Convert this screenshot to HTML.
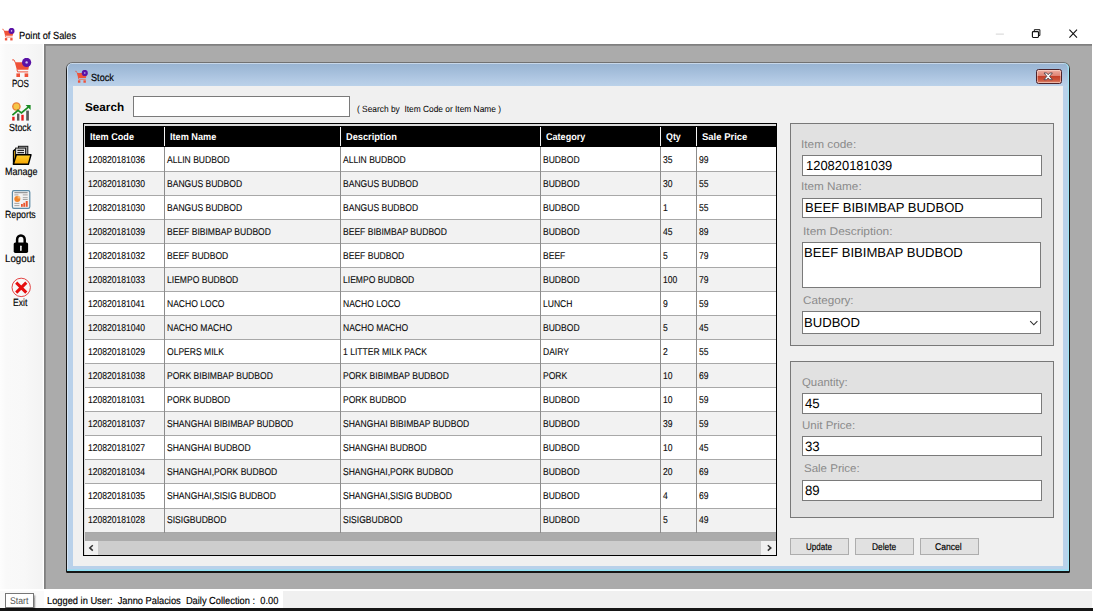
<!DOCTYPE html>
<html><head><meta charset="utf-8"><title>Point of Sales</title>
<style>
html,body{margin:0;padding:0;background:#fff;overflow:hidden}
body{width:1093px;height:611px;position:relative;font-family:"Liberation Sans",sans-serif}
body>div,body>svg,body>span{position:absolute;display:block}
.t{white-space:pre;line-height:14px;transform-origin:0 0}
.k{-webkit-text-stroke:0.16px currentColor}
.g{-webkit-text-stroke:0.12px currentColor}
</style></head><body>
<div style="left:0px;top:44px;width:44px;height:546px;background:linear-gradient(90deg,#fdfdfd 0%,#f9f9f9 14%,#f8f8f8 55%,#f3f3f3 96%,#ffffff 98%)"></div>
<div style="left:44px;top:44px;width:1047.5px;height:545px;background:#ababab;box-shadow:inset 1.8px 1.8px 0 #808080"></div>
<div style="left:0px;top:589px;width:1093px;height:1.5px;background:#fff"></div>
<div style="left:0px;top:590.7px;width:1091.6px;height:17.5px;background:#f0f0f0"></div>
<div style="left:0px;top:590.5px;width:44px;height:17.7px;background:#fafafa"></div>
<div style="left:44px;top:590.5px;width:239px;height:17.7px;background:#fff"></div>
<div style="left:0px;top:608.2px;width:1093px;height:3px;background:#161616"></div>
<div style="left:5.3px;top:592.7px;width:29px;height:15px;background:#fff;border:1px solid #767676;box-sizing:border-box;box-shadow:1.5px 1.5px 1.5px rgba(0,0,0,.35)"></div>
<svg style="left:990px;top:25px" width="100" height="18" viewBox="990 25 100 18"><path d="M995.8 34.1H1003.9" stroke="#d4d4d4" stroke-width="1"/><path d="M1034.3 31.2v-1.5h5.6v5.8h-1.3" fill="none" stroke="#111" stroke-width="1"/><rect x="1032.4" y="31.6" width="6.1" height="5.9" rx="0.9" fill="none" stroke="#111" stroke-width="1.15"/><path d="M1069.4 29.7l7.6 8M1077 29.7l-7.6 8" stroke="#111" stroke-width="1.1"/></svg>
<div style="left:66.1px;top:61.5px;width:1003.6px;height:511.0px;border-radius:6.5px 6.5px 1.5px 1.5px;background:linear-gradient(180deg,#787878 0,#686868 1.2px,#1c1c1c 9px,#161616 100%)"></div>
<div style="left:67.1px;top:62.6px;width:1001.7px;height:508.8px;border-radius:5.5px 5.5px 0.5px 0.5px;background:linear-gradient(180deg,#e3ecf7 0,#9ab5d3 1.3px,#a3bdda 8px,#b4cbe5 18px,#bcd3ea 24px,#b9d1ea 25px,#b9d1ea 100%);box-shadow:inset 0 -1.5px 0 #8fe2f4, inset -1.2px 0 0 #a0e4f4, inset 1px 0 0 #d6e4f2"></div>
<div style="left:73px;top:86.3px;width:990.2px;height:479.5px;background:#f0f0f0"></div>
<div style="left:1036.1px;top:69.4px;width:26px;height:14.4px;box-sizing:border-box;border:1px solid #4d222a;border-radius:2.5px;background:linear-gradient(180deg,#eeb3a8 0,#e79a8c 20%,#de8272 46%,#c4402a 50%,#cc5238 75%,#dc8a72 100%);box-shadow:inset 0 0 0 0.9px rgba(255,225,215,.55)"></div>
<svg style="left:1043.4px;top:72px" width="10.4" height="8.7" viewBox="-1 -1 10.4 8.7"><path d="M0 0H2.7L4.2 1.75L5.7 0H8.4L5.55 3.35L8.4 6.7H5.7L4.2 4.95L2.7 6.7H0L2.85 3.35Z" fill="#fff" stroke="#50444c" stroke-width="0.9" stroke-linejoin="round"/></svg>
<div style="left:132.7px;top:96.2px;width:217px;height:20.6px;box-sizing:border-box;background:#fff;border:1px solid #7a7a7a"></div>
<div style="left:83.1px;top:123.1px;width:693.9px;height:432.9px;background:#000"></div>
<div style="left:84.1px;top:124.1px;width:691.8px;height:430.6px;background:#dadada"></div>
<div style="left:85.2px;top:125.6px;width:690.6999999999999px;height:429.1px;background:#ababab"></div>
<div style="left:85.2px;top:125.6px;width:690.6999999999999px;height:21.599999999999994px;background:#000"></div>
<div style="left:85.2px;top:147.2px;width:690.6999999999999px;height:24.75px;background:#fff;box-shadow:inset 0 -1px 0 #a8a8a8"></div>
<div style="left:85.2px;top:171.95px;width:690.6999999999999px;height:24.04px;background:#f2f2f2;box-shadow:inset 0 -1px 0 #a8a8a8"></div>
<div style="left:85.2px;top:195.99px;width:690.6999999999999px;height:24.04px;background:#fff;box-shadow:inset 0 -1px 0 #a8a8a8"></div>
<div style="left:85.2px;top:220.03px;width:690.6999999999999px;height:24.04px;background:#f2f2f2;box-shadow:inset 0 -1px 0 #a8a8a8"></div>
<div style="left:85.2px;top:244.07px;width:690.6999999999999px;height:24.04px;background:#fff;box-shadow:inset 0 -1px 0 #a8a8a8"></div>
<div style="left:85.2px;top:268.11px;width:690.6999999999999px;height:24.04px;background:#f2f2f2;box-shadow:inset 0 -1px 0 #a8a8a8"></div>
<div style="left:85.2px;top:292.15px;width:690.6999999999999px;height:24.04px;background:#fff;box-shadow:inset 0 -1px 0 #a8a8a8"></div>
<div style="left:85.2px;top:316.19px;width:690.6999999999999px;height:24.04px;background:#f2f2f2;box-shadow:inset 0 -1px 0 #a8a8a8"></div>
<div style="left:85.2px;top:340.23px;width:690.6999999999999px;height:24.04px;background:#fff;box-shadow:inset 0 -1px 0 #a8a8a8"></div>
<div style="left:85.2px;top:364.27px;width:690.6999999999999px;height:24.04px;background:#f2f2f2;box-shadow:inset 0 -1px 0 #a8a8a8"></div>
<div style="left:85.2px;top:388.31px;width:690.6999999999999px;height:24.04px;background:#fff;box-shadow:inset 0 -1px 0 #a8a8a8"></div>
<div style="left:85.2px;top:412.35px;width:690.6999999999999px;height:24.04px;background:#f2f2f2;box-shadow:inset 0 -1px 0 #a8a8a8"></div>
<div style="left:85.2px;top:436.39px;width:690.6999999999999px;height:24.04px;background:#fff;box-shadow:inset 0 -1px 0 #a8a8a8"></div>
<div style="left:85.2px;top:460.43px;width:690.6999999999999px;height:24.04px;background:#f2f2f2;box-shadow:inset 0 -1px 0 #a8a8a8"></div>
<div style="left:85.2px;top:484.47px;width:690.6999999999999px;height:24.04px;background:#fff;box-shadow:inset 0 -1px 0 #a8a8a8"></div>
<div style="left:85.2px;top:508.51px;width:690.6999999999999px;height:24.04px;background:#f2f2f2;box-shadow:inset 0 -1px 0 #a8a8a8"></div>
<div style="left:164.1px;top:147.2px;width:1px;height:385.34999999999997px;background:#8c8c8c"></div>
<div style="left:164.4px;top:127px;width:1px;height:19.4px;background:#f4f4f4"></div>
<div style="left:340.0px;top:147.2px;width:1px;height:385.34999999999997px;background:#8c8c8c"></div>
<div style="left:340.3px;top:127px;width:1px;height:19.4px;background:#f4f4f4"></div>
<div style="left:540.1px;top:147.2px;width:1px;height:385.34999999999997px;background:#8c8c8c"></div>
<div style="left:540.4px;top:127px;width:1px;height:19.4px;background:#f4f4f4"></div>
<div style="left:660.1px;top:147.2px;width:1px;height:385.34999999999997px;background:#8c8c8c"></div>
<div style="left:660.4px;top:127px;width:1px;height:19.4px;background:#f4f4f4"></div>
<div style="left:696.1px;top:147.2px;width:1px;height:385.34999999999997px;background:#8c8c8c"></div>
<div style="left:696.4px;top:127px;width:1px;height:19.4px;background:#f4f4f4"></div>
<div style="left:85.2px;top:541.0px;width:690.6999999999999px;height:13.7px;background:#f0f0f0"></div>
<div style="left:98px;top:541.0px;width:662.8px;height:13.6px;background:#cdcdcd"></div>
<svg style="left:84.8px;top:541px" width="692" height="14" viewBox="84.8 541 692 14"><path d="M92.6 545.2l-3 2.7 3 2.7" fill="none" stroke="#333" stroke-width="1.5"/><path d="M767.6 545.2l3 2.7-3 2.7" fill="none" stroke="#333" stroke-width="1.5"/></svg>
<div style="left:789.9px;top:123.2px;width:263.8px;height:222.7px;box-sizing:border-box;background:#e1e1e1;border:1px solid #787878"></div>
<div style="left:789.9px;top:361.1px;width:263.8px;height:156.5px;box-sizing:border-box;background:#e1e1e1;border:1px solid #787878"></div>
<div style="left:802.4px;top:155.2px;width:239.3px;height:20.4px;box-sizing:border-box;background:#fff;border:1px solid #7a7a7a"></div>
<div style="left:802.4px;top:198.3px;width:239.3px;height:20.0px;box-sizing:border-box;background:#fff;border:1px solid #7a7a7a"></div>
<div style="left:802.0px;top:242.0px;width:239.2px;height:46px;box-sizing:border-box;background:#fff;border:1px solid #7a7a7a"></div>
<div style="left:802.0px;top:311.0px;width:239.2px;height:22.6px;box-sizing:border-box;background:#fff;border:1px solid #7a7a7a"></div>
<svg style="left:1028px;top:318px" width="12" height="10" viewBox="0 0 12 10"><path d="M2.2 3.2l3.6 3.6 3.6-3.6" fill="none" stroke="#333" stroke-width="1.15"/></svg>
<div style="left:802.4px;top:393.3px;width:239.3px;height:20.6px;box-sizing:border-box;background:#fff;border:1px solid #7a7a7a"></div>
<div style="left:802.4px;top:435.6px;width:239.3px;height:20.8px;box-sizing:border-box;background:#fff;border:1px solid #7a7a7a"></div>
<div style="left:802.4px;top:480.1px;width:239.3px;height:20.6px;box-sizing:border-box;background:#fff;border:1px solid #7a7a7a"></div>
<div style="left:790.2px;top:538.3px;width:58.8px;height:16.5px;box-sizing:border-box;background:#e1e1e1;border:1px solid #adadad"></div>
<div style="left:855.4px;top:538.3px;width:58.4px;height:16.5px;box-sizing:border-box;background:#e1e1e1;border:1px solid #adadad"></div>
<div style="left:920.0px;top:538.3px;width:58.6px;height:16.5px;box-sizing:border-box;background:#e1e1e1;border:1px solid #adadad"></div>
<svg style="left:0;top:0" width="0" height="0"><symbol id="cart" viewBox="0 0 20 20"><path d="M0.2 1.9H2L3.3 4.6" fill="none" stroke="#ef5138" stroke-width="1"/><path d="M2.8 4.3H17.8L16.3 11.8H4.8Z" fill="#ef5138"/><path d="M4.9 11.6L5.6 13.9H16.2" fill="none" stroke="#ef5138" stroke-width="1"/><rect x="4.4" y="15.4" width="3.6" height="3.6" fill="#ef5138"/><rect x="12.6" y="15.4" width="3.6" height="3.6" fill="#ef5138"/><circle cx="14.6" cy="4.4" r="4.6" fill="#5a12a6"/><circle cx="14.6" cy="4.4" r="1.2" fill="#d2bfee"/></symbol></svg>
<svg style="left:12px;top:57.5px" width="20" height="20" viewBox="0 0 20 20"><use href="#cart"/></svg>
<svg style="left:2.1px;top:27.9px" width="13.1" height="13.1" viewBox="0 0 20 20"><use href="#cart"/></svg>
<svg style="left:74.9px;top:69.9px" width="13.4" height="13.4" viewBox="0 0 20 20"><use href="#cart"/></svg>
<svg style="left:10px;top:100px" width="24" height="24" viewBox="10 100 24 24"><circle cx="16.4" cy="106.5" r="4.3" fill="#e8803a"/><circle cx="16.4" cy="106.5" r="2.9" fill="#f6c646"/><rect x="12.2" y="116.8" width="2.4" height="3.8" fill="#e81c1c"/><rect x="17.0" y="113.6" width="2.4" height="7.0" fill="#5a5a5a"/><rect x="21.3" y="114.8" width="2.4" height="5.8" fill="#e81c1c"/><rect x="26.2" y="110.6" width="2.7" height="10.0" fill="#5a5a5a"/><path d="M12.4 115.2L18 110.4L21.4 112.9L28.6 106.8" fill="none" stroke="#1a8c22" stroke-width="1.7"/><path d="M25.6 104.9H30.6V109.9Z" fill="#1a8c22"/></svg>
<svg style="left:11px;top:144px" width="22" height="22" viewBox="11 144 22 22"><defs><linearGradient id="fg" x1="0" y1="0" x2="0" y2="1"><stop offset="0" stop-color="#ffd22e"/><stop offset="1" stop-color="#f5a200"/></linearGradient></defs><rect x="18.4" y="146.3" width="9.4" height="9.5" fill="#a6a6a6" stroke="#161616" stroke-width="1"/><path d="M13.5 164.2V150.9L15.6 149.2V157" fill="#f0b010" stroke="#000" stroke-width="1.3"/><rect x="15.6" y="148.1" width="10" height="8.6" fill="#e8e8e8" stroke="#1c1c1c" stroke-width="1"/><path d="M17.4 150.4H24M17.4 152.6H24" stroke="#2a2a2a" stroke-width="1.3"/><path d="M16.3 154.8H31L28.4 164.3H13.4Z" fill="url(#fg)" stroke="#000" stroke-width="1.4" stroke-linejoin="round"/></svg>
<svg style="left:11px;top:189px" width="21" height="21" viewBox="11 189 21 21"><rect x="12.4" y="190.6" width="17.4" height="17.8" rx="1.6" fill="#f2f2f2" stroke="#5b8aa6" stroke-width="1.2"/><path d="M14.4 192.7H27.6" stroke="#777" stroke-width="0.9"/><path d="M22.8 194.9H27.7M22.8 197.7H27.7M22.8 199.5H27.7M14.4 203.4H19.4M14.4 205.6H19.4M14.4 194.9H18.4" stroke="#9a9a9a" stroke-width="0.9"/><circle cx="17.3" cy="198.9" r="3.0" fill="#f0842a"/><path d="M17.6 198.5V195.7A2.9 2.9 0 0 1 20.4 198.5Z" fill="#f9b872"/><rect x="21.0" y="204.0" width="1.8" height="2.8" fill="#e8552e"/><rect x="23.3" y="202.8" width="1.8" height="4.0" fill="#e8552e"/><rect x="25.7" y="201.0" width="2.0" height="5.8" fill="#e8552e"/></svg>
<svg style="left:12px;top:232px" width="18" height="22" viewBox="12 232 18 22"><path d="M17.1 243V239.6a3.8 4.2 0 0 1 7.6 0V243" fill="none" stroke="#000" stroke-width="2.5"/><rect x="13.7" y="242.4" width="14.4" height="10.5" rx="1.6" fill="#000"/><path d="M20.9 246.2V250.2" stroke="#fff" stroke-width="1.5" stroke-linecap="round"/></svg>
<svg style="left:10px;top:276px" width="23" height="23" viewBox="10 276 23 23"><circle cx="21.2" cy="287.4" r="9.2" fill="none" stroke="#e03030" stroke-width="0.9"/><path d="M16.2 282.6L26.3 292.6M26.3 282.6L16.2 292.6" stroke="#e60f0f" stroke-width="3"/></svg>
<span class="t k" style="left:18.50px;top:28.80px;font-size:10.3px;color:#000;transform:rotate(0.03deg) scaleX(0.8992)">Point of Sales</span>
<span class="t k" style="left:90.60px;top:70.50px;font-size:10.3px;color:#000;transform:rotate(0.03deg) scaleX(0.8871)">Stock</span>
<span class="t k" style="left:11.90px;top:76.70px;font-size:10.4px;color:#000;transform:rotate(0.03deg) scaleX(0.7723)">POS</span>
<span class="t k" style="left:9.20px;top:120.60px;font-size:10.4px;color:#000;transform:rotate(0.03deg) scaleX(0.8548)">Stock</span>
<span class="t k" style="left:4.70px;top:164.50px;font-size:10.4px;color:#000;transform:rotate(0.03deg) scaleX(0.8658)">Manage</span>
<span class="t k" style="left:5.00px;top:208.40px;font-size:10.4px;color:#000;transform:rotate(0.03deg) scaleX(0.8456)">Reports</span>
<span class="t k" style="left:5.40px;top:252.40px;font-size:10.4px;color:#000;transform:rotate(0.03deg) scaleX(0.9375)">Logout</span>
<span class="t k" style="left:13.30px;top:296.40px;font-size:10.4px;color:#000;transform:rotate(0.03deg) scaleX(0.8260)">Exit</span>
<span class="t" style="left:9.60px;top:593.50px;font-size:9.8px;color:#555;transform:rotate(0.03deg) scaleX(0.8871)">Start</span>
<span class="t k" style="left:47.20px;top:593.50px;font-size:10.2px;color:#000;transform:rotate(0.03deg) scaleX(0.9117)">Logged in User:  Janno Palacios  Daily Collection :  0.00</span>
<span class="t" style="left:85.20px;top:100.20px;font-size:11.6px;color:#000;transform:rotate(0.03deg) scaleX(1.0107);font-weight:bold">Search</span>
<span class="t" style="left:357.00px;top:101.50px;font-size:9.0px;color:#000;transform:rotate(0.03deg) scaleX(0.9287)">( Search by  Item Code or Item Name )</span>
<span class="t" style="left:90.20px;top:129.90px;font-size:9.8px;color:#fff;transform:rotate(0.03deg) scaleX(0.9288);font-weight:bold">Item Code</span>
<span class="t" style="left:170.20px;top:129.90px;font-size:9.8px;color:#fff;transform:rotate(0.03deg) scaleX(0.9341);font-weight:bold">Item Name</span>
<span class="t" style="left:345.90px;top:129.90px;font-size:9.8px;color:#fff;transform:rotate(0.03deg) scaleX(0.9423);font-weight:bold">Description</span>
<span class="t" style="left:545.50px;top:129.90px;font-size:9.8px;color:#fff;transform:rotate(0.03deg) scaleX(0.9252);font-weight:bold">Category</span>
<span class="t" style="left:665.50px;top:129.90px;font-size:9.8px;color:#fff;transform:rotate(0.03deg) scaleX(0.9062);font-weight:bold">Qty</span>
<span class="t" style="left:702.10px;top:129.90px;font-size:9.8px;color:#fff;transform:rotate(0.03deg) scaleX(0.9685);font-weight:bold">Sale Price</span>
<span class="t g" style="left:87.90px;top:153.05px;font-size:9.9px;color:#0c0c0c;transform:rotate(0.03deg) scaleX(0.8660)">120820181036</span>
<span class="t g" style="left:167.30px;top:153.05px;font-size:9.9px;color:#0c0c0c;transform:rotate(0.03deg) scaleX(0.8660)">ALLIN BUDBOD</span>
<span class="t g" style="left:343.20px;top:153.05px;font-size:9.9px;color:#0c0c0c;transform:rotate(0.03deg) scaleX(0.8660)">ALLIN BUDBOD</span>
<span class="t g" style="left:543.40px;top:153.05px;font-size:9.9px;color:#0c0c0c;transform:rotate(0.03deg) scaleX(0.8660)">BUDBOD</span>
<span class="t g" style="left:663.40px;top:153.05px;font-size:9.9px;color:#0c0c0c;transform:rotate(0.03deg) scaleX(0.8660)">35</span>
<span class="t g" style="left:699.20px;top:153.05px;font-size:9.9px;color:#0c0c0c;transform:rotate(0.03deg) scaleX(0.8660)">99</span>
<span class="t g" style="left:87.90px;top:177.07px;font-size:9.9px;color:#0c0c0c;transform:rotate(0.03deg) scaleX(0.8660)">120820181030</span>
<span class="t g" style="left:167.30px;top:177.07px;font-size:9.9px;color:#0c0c0c;transform:rotate(0.03deg) scaleX(0.8660)">BANGUS BUDBOD</span>
<span class="t g" style="left:343.20px;top:177.07px;font-size:9.9px;color:#0c0c0c;transform:rotate(0.03deg) scaleX(0.8660)">BANGUS BUDBOD</span>
<span class="t g" style="left:543.40px;top:177.07px;font-size:9.9px;color:#0c0c0c;transform:rotate(0.03deg) scaleX(0.8660)">BUDBOD</span>
<span class="t g" style="left:663.40px;top:177.07px;font-size:9.9px;color:#0c0c0c;transform:rotate(0.03deg) scaleX(0.8660)">30</span>
<span class="t g" style="left:699.20px;top:177.07px;font-size:9.9px;color:#0c0c0c;transform:rotate(0.03deg) scaleX(0.8660)">55</span>
<span class="t g" style="left:87.90px;top:201.09px;font-size:9.9px;color:#0c0c0c;transform:rotate(0.03deg) scaleX(0.8660)">120820181030</span>
<span class="t g" style="left:167.30px;top:201.09px;font-size:9.9px;color:#0c0c0c;transform:rotate(0.03deg) scaleX(0.8660)">BANGUS BUDBOD</span>
<span class="t g" style="left:343.20px;top:201.09px;font-size:9.9px;color:#0c0c0c;transform:rotate(0.03deg) scaleX(0.8660)">BANGUS BUDBOD</span>
<span class="t g" style="left:543.40px;top:201.09px;font-size:9.9px;color:#0c0c0c;transform:rotate(0.03deg) scaleX(0.8660)">BUDBOD</span>
<span class="t g" style="left:663.40px;top:201.09px;font-size:9.9px;color:#0c0c0c;transform:rotate(0.03deg) scaleX(0.8660)">1</span>
<span class="t g" style="left:699.20px;top:201.09px;font-size:9.9px;color:#0c0c0c;transform:rotate(0.03deg) scaleX(0.8660)">55</span>
<span class="t g" style="left:87.90px;top:225.11px;font-size:9.9px;color:#0c0c0c;transform:rotate(0.03deg) scaleX(0.8660)">120820181039</span>
<span class="t g" style="left:167.30px;top:225.11px;font-size:9.9px;color:#0c0c0c;transform:rotate(0.03deg) scaleX(0.8660)">BEEF BIBIMBAP BUDBOD</span>
<span class="t g" style="left:343.20px;top:225.11px;font-size:9.9px;color:#0c0c0c;transform:rotate(0.03deg) scaleX(0.8660)">BEEF BIBIMBAP BUDBOD</span>
<span class="t g" style="left:543.40px;top:225.11px;font-size:9.9px;color:#0c0c0c;transform:rotate(0.03deg) scaleX(0.8660)">BUDBOD</span>
<span class="t g" style="left:663.40px;top:225.11px;font-size:9.9px;color:#0c0c0c;transform:rotate(0.03deg) scaleX(0.8660)">45</span>
<span class="t g" style="left:699.20px;top:225.11px;font-size:9.9px;color:#0c0c0c;transform:rotate(0.03deg) scaleX(0.8660)">89</span>
<span class="t g" style="left:87.90px;top:249.13px;font-size:9.9px;color:#0c0c0c;transform:rotate(0.03deg) scaleX(0.8660)">120820181032</span>
<span class="t g" style="left:167.30px;top:249.13px;font-size:9.9px;color:#0c0c0c;transform:rotate(0.03deg) scaleX(0.8660)">BEEF BUDBOD</span>
<span class="t g" style="left:343.20px;top:249.13px;font-size:9.9px;color:#0c0c0c;transform:rotate(0.03deg) scaleX(0.8660)">BEEF BUDBOD</span>
<span class="t g" style="left:543.40px;top:249.13px;font-size:9.9px;color:#0c0c0c;transform:rotate(0.03deg) scaleX(0.8660)">BEEF</span>
<span class="t g" style="left:663.40px;top:249.13px;font-size:9.9px;color:#0c0c0c;transform:rotate(0.03deg) scaleX(0.8660)">5</span>
<span class="t g" style="left:699.20px;top:249.13px;font-size:9.9px;color:#0c0c0c;transform:rotate(0.03deg) scaleX(0.8660)">79</span>
<span class="t g" style="left:87.90px;top:273.15px;font-size:9.9px;color:#0c0c0c;transform:rotate(0.03deg) scaleX(0.8660)">120820181033</span>
<span class="t g" style="left:167.30px;top:273.15px;font-size:9.9px;color:#0c0c0c;transform:rotate(0.03deg) scaleX(0.8660)">LIEMPO BUDBOD</span>
<span class="t g" style="left:343.20px;top:273.15px;font-size:9.9px;color:#0c0c0c;transform:rotate(0.03deg) scaleX(0.8660)">LIEMPO BUDBOD</span>
<span class="t g" style="left:543.40px;top:273.15px;font-size:9.9px;color:#0c0c0c;transform:rotate(0.03deg) scaleX(0.8660)">BUDBOD</span>
<span class="t g" style="left:663.40px;top:273.15px;font-size:9.9px;color:#0c0c0c;transform:rotate(0.03deg) scaleX(0.8660)">100</span>
<span class="t g" style="left:699.20px;top:273.15px;font-size:9.9px;color:#0c0c0c;transform:rotate(0.03deg) scaleX(0.8660)">79</span>
<span class="t g" style="left:87.90px;top:297.17px;font-size:9.9px;color:#0c0c0c;transform:rotate(0.03deg) scaleX(0.8660)">120820181041</span>
<span class="t g" style="left:167.30px;top:297.17px;font-size:9.9px;color:#0c0c0c;transform:rotate(0.03deg) scaleX(0.8660)">NACHO LOCO</span>
<span class="t g" style="left:343.20px;top:297.17px;font-size:9.9px;color:#0c0c0c;transform:rotate(0.03deg) scaleX(0.8660)">NACHO LOCO</span>
<span class="t g" style="left:543.40px;top:297.17px;font-size:9.9px;color:#0c0c0c;transform:rotate(0.03deg) scaleX(0.8660)">LUNCH</span>
<span class="t g" style="left:663.40px;top:297.17px;font-size:9.9px;color:#0c0c0c;transform:rotate(0.03deg) scaleX(0.8660)">9</span>
<span class="t g" style="left:699.20px;top:297.17px;font-size:9.9px;color:#0c0c0c;transform:rotate(0.03deg) scaleX(0.8660)">59</span>
<span class="t g" style="left:87.90px;top:321.19px;font-size:9.9px;color:#0c0c0c;transform:rotate(0.03deg) scaleX(0.8660)">120820181040</span>
<span class="t g" style="left:167.30px;top:321.19px;font-size:9.9px;color:#0c0c0c;transform:rotate(0.03deg) scaleX(0.8660)">NACHO MACHO</span>
<span class="t g" style="left:343.20px;top:321.19px;font-size:9.9px;color:#0c0c0c;transform:rotate(0.03deg) scaleX(0.8660)">NACHO MACHO</span>
<span class="t g" style="left:543.40px;top:321.19px;font-size:9.9px;color:#0c0c0c;transform:rotate(0.03deg) scaleX(0.8660)">BUDBOD</span>
<span class="t g" style="left:663.40px;top:321.19px;font-size:9.9px;color:#0c0c0c;transform:rotate(0.03deg) scaleX(0.8660)">5</span>
<span class="t g" style="left:699.20px;top:321.19px;font-size:9.9px;color:#0c0c0c;transform:rotate(0.03deg) scaleX(0.8660)">45</span>
<span class="t g" style="left:87.90px;top:345.21px;font-size:9.9px;color:#0c0c0c;transform:rotate(0.03deg) scaleX(0.8660)">120820181029</span>
<span class="t g" style="left:167.30px;top:345.21px;font-size:9.9px;color:#0c0c0c;transform:rotate(0.03deg) scaleX(0.8660)">OLPERS MILK</span>
<span class="t g" style="left:343.20px;top:345.21px;font-size:9.9px;color:#0c0c0c;transform:rotate(0.03deg) scaleX(0.8660)">1 LITTER MILK PACK</span>
<span class="t g" style="left:543.40px;top:345.21px;font-size:9.9px;color:#0c0c0c;transform:rotate(0.03deg) scaleX(0.8660)">DAIRY</span>
<span class="t g" style="left:663.40px;top:345.21px;font-size:9.9px;color:#0c0c0c;transform:rotate(0.03deg) scaleX(0.8660)">2</span>
<span class="t g" style="left:699.20px;top:345.21px;font-size:9.9px;color:#0c0c0c;transform:rotate(0.03deg) scaleX(0.8660)">55</span>
<span class="t g" style="left:87.90px;top:369.23px;font-size:9.9px;color:#0c0c0c;transform:rotate(0.03deg) scaleX(0.8660)">120820181038</span>
<span class="t g" style="left:167.30px;top:369.23px;font-size:9.9px;color:#0c0c0c;transform:rotate(0.03deg) scaleX(0.8660)">PORK BIBIMBAP BUDBOD</span>
<span class="t g" style="left:343.20px;top:369.23px;font-size:9.9px;color:#0c0c0c;transform:rotate(0.03deg) scaleX(0.8660)">PORK BIBIMBAP BUDBOD</span>
<span class="t g" style="left:543.40px;top:369.23px;font-size:9.9px;color:#0c0c0c;transform:rotate(0.03deg) scaleX(0.8660)">PORK</span>
<span class="t g" style="left:663.40px;top:369.23px;font-size:9.9px;color:#0c0c0c;transform:rotate(0.03deg) scaleX(0.8660)">10</span>
<span class="t g" style="left:699.20px;top:369.23px;font-size:9.9px;color:#0c0c0c;transform:rotate(0.03deg) scaleX(0.8660)">69</span>
<span class="t g" style="left:87.90px;top:393.25px;font-size:9.9px;color:#0c0c0c;transform:rotate(0.03deg) scaleX(0.8660)">120820181031</span>
<span class="t g" style="left:167.30px;top:393.25px;font-size:9.9px;color:#0c0c0c;transform:rotate(0.03deg) scaleX(0.8660)">PORK BUDBOD</span>
<span class="t g" style="left:343.20px;top:393.25px;font-size:9.9px;color:#0c0c0c;transform:rotate(0.03deg) scaleX(0.8660)">PORK BUDBOD</span>
<span class="t g" style="left:543.40px;top:393.25px;font-size:9.9px;color:#0c0c0c;transform:rotate(0.03deg) scaleX(0.8660)">BUDBOD</span>
<span class="t g" style="left:663.40px;top:393.25px;font-size:9.9px;color:#0c0c0c;transform:rotate(0.03deg) scaleX(0.8660)">10</span>
<span class="t g" style="left:699.20px;top:393.25px;font-size:9.9px;color:#0c0c0c;transform:rotate(0.03deg) scaleX(0.8660)">59</span>
<span class="t g" style="left:87.90px;top:417.27px;font-size:9.9px;color:#0c0c0c;transform:rotate(0.03deg) scaleX(0.8660)">120820181037</span>
<span class="t g" style="left:167.30px;top:417.27px;font-size:9.9px;color:#0c0c0c;transform:rotate(0.03deg) scaleX(0.8660)">SHANGHAI BIBIMBAP BUDBOD</span>
<span class="t g" style="left:343.20px;top:417.27px;font-size:9.9px;color:#0c0c0c;transform:rotate(0.03deg) scaleX(0.8660)">SHANGHAI BIBIMBAP BUDBOD</span>
<span class="t g" style="left:543.40px;top:417.27px;font-size:9.9px;color:#0c0c0c;transform:rotate(0.03deg) scaleX(0.8660)">BUDBOD</span>
<span class="t g" style="left:663.40px;top:417.27px;font-size:9.9px;color:#0c0c0c;transform:rotate(0.03deg) scaleX(0.8660)">39</span>
<span class="t g" style="left:699.20px;top:417.27px;font-size:9.9px;color:#0c0c0c;transform:rotate(0.03deg) scaleX(0.8660)">59</span>
<span class="t g" style="left:87.90px;top:441.29px;font-size:9.9px;color:#0c0c0c;transform:rotate(0.03deg) scaleX(0.8660)">120820181027</span>
<span class="t g" style="left:167.30px;top:441.29px;font-size:9.9px;color:#0c0c0c;transform:rotate(0.03deg) scaleX(0.8660)">SHANGHAI BUDBOD</span>
<span class="t g" style="left:343.20px;top:441.29px;font-size:9.9px;color:#0c0c0c;transform:rotate(0.03deg) scaleX(0.8660)">SHANGHAI BUDBOD</span>
<span class="t g" style="left:543.40px;top:441.29px;font-size:9.9px;color:#0c0c0c;transform:rotate(0.03deg) scaleX(0.8660)">BUDBOD</span>
<span class="t g" style="left:663.40px;top:441.29px;font-size:9.9px;color:#0c0c0c;transform:rotate(0.03deg) scaleX(0.8660)">10</span>
<span class="t g" style="left:699.20px;top:441.29px;font-size:9.9px;color:#0c0c0c;transform:rotate(0.03deg) scaleX(0.8660)">45</span>
<span class="t g" style="left:87.90px;top:465.31px;font-size:9.9px;color:#0c0c0c;transform:rotate(0.03deg) scaleX(0.8660)">120820181034</span>
<span class="t g" style="left:167.30px;top:465.31px;font-size:9.9px;color:#0c0c0c;transform:rotate(0.03deg) scaleX(0.8660)">SHANGHAI,PORK BUDBOD</span>
<span class="t g" style="left:343.20px;top:465.31px;font-size:9.9px;color:#0c0c0c;transform:rotate(0.03deg) scaleX(0.8660)">SHANGHAI,PORK BUDBOD</span>
<span class="t g" style="left:543.40px;top:465.31px;font-size:9.9px;color:#0c0c0c;transform:rotate(0.03deg) scaleX(0.8660)">BUDBOD</span>
<span class="t g" style="left:663.40px;top:465.31px;font-size:9.9px;color:#0c0c0c;transform:rotate(0.03deg) scaleX(0.8660)">20</span>
<span class="t g" style="left:699.20px;top:465.31px;font-size:9.9px;color:#0c0c0c;transform:rotate(0.03deg) scaleX(0.8660)">69</span>
<span class="t g" style="left:87.90px;top:489.33px;font-size:9.9px;color:#0c0c0c;transform:rotate(0.03deg) scaleX(0.8660)">120820181035</span>
<span class="t g" style="left:167.30px;top:489.33px;font-size:9.9px;color:#0c0c0c;transform:rotate(0.03deg) scaleX(0.8660)">SHANGHAI,SISIG BUDBOD</span>
<span class="t g" style="left:343.20px;top:489.33px;font-size:9.9px;color:#0c0c0c;transform:rotate(0.03deg) scaleX(0.8660)">SHANGHAI,SISIG BUDBOD</span>
<span class="t g" style="left:543.40px;top:489.33px;font-size:9.9px;color:#0c0c0c;transform:rotate(0.03deg) scaleX(0.8660)">BUDBOD</span>
<span class="t g" style="left:663.40px;top:489.33px;font-size:9.9px;color:#0c0c0c;transform:rotate(0.03deg) scaleX(0.8660)">4</span>
<span class="t g" style="left:699.20px;top:489.33px;font-size:9.9px;color:#0c0c0c;transform:rotate(0.03deg) scaleX(0.8660)">69</span>
<span class="t g" style="left:87.90px;top:513.35px;font-size:9.9px;color:#0c0c0c;transform:rotate(0.03deg) scaleX(0.8660)">120820181028</span>
<span class="t g" style="left:167.30px;top:513.35px;font-size:9.9px;color:#0c0c0c;transform:rotate(0.03deg) scaleX(0.8660)">SISIGBUDBOD</span>
<span class="t g" style="left:343.20px;top:513.35px;font-size:9.9px;color:#0c0c0c;transform:rotate(0.03deg) scaleX(0.8660)">SISIGBUDBOD</span>
<span class="t g" style="left:543.40px;top:513.35px;font-size:9.9px;color:#0c0c0c;transform:rotate(0.03deg) scaleX(0.8660)">BUDBOD</span>
<span class="t g" style="left:663.40px;top:513.35px;font-size:9.9px;color:#0c0c0c;transform:rotate(0.03deg) scaleX(0.8660)">5</span>
<span class="t g" style="left:699.20px;top:513.35px;font-size:9.9px;color:#0c0c0c;transform:rotate(0.03deg) scaleX(0.8660)">49</span>
<span class="t" style="left:801.04px;top:136.70px;font-size:11.2px;color:#8a8a8a;transform:rotate(0.03deg) scaleX(1.0562)">Item code:</span>
<span class="t" style="left:805.52px;top:159.00px;font-size:13.2px;color:#000;transform:rotate(0.03deg) scaleX(0.9807)">120820181039</span>
<span class="t" style="left:801.35px;top:179.40px;font-size:11.2px;color:#8a8a8a;transform:rotate(0.03deg) scaleX(1.0492)">Item Name:</span>
<span class="t" style="left:804.61px;top:200.80px;font-size:13.2px;color:#000;transform:rotate(0.03deg) scaleX(0.9908)">BEEF BIBIMBAP BUDBOD</span>
<span class="t" style="left:802.83px;top:223.50px;font-size:11.2px;color:#8a8a8a;transform:rotate(0.03deg) scaleX(1.0673)">Item Description:</span>
<span class="t" style="left:804.01px;top:245.70px;font-size:13.2px;color:#000;transform:rotate(0.03deg) scaleX(0.9908)">BEEF BIBIMBAP BUDBOD</span>
<span class="t" style="left:803.10px;top:293.00px;font-size:11.2px;color:#8a8a8a;transform:rotate(0.03deg) scaleX(1.0435)">Category:</span>
<span class="t" style="left:804.01px;top:315.50px;font-size:13.2px;color:#000;transform:rotate(0.03deg) scaleX(0.9928)">BUDBOD</span>
<span class="t" style="left:802.30px;top:374.50px;font-size:11.2px;color:#8a8a8a;transform:rotate(0.03deg) scaleX(1.0187)">Quantity:</span>
<span class="t" style="left:805.10px;top:397.30px;font-size:13.6px;color:#000;transform:rotate(0.03deg) scaleX(0.9753)">45</span>
<span class="t" style="left:802.30px;top:417.50px;font-size:11.2px;color:#8a8a8a;transform:rotate(0.03deg) scaleX(1.0293)">Unit Price:</span>
<span class="t" style="left:805.10px;top:439.80px;font-size:13.6px;color:#000;transform:rotate(0.03deg) scaleX(0.9753)">33</span>
<span class="t" style="left:804.00px;top:461.00px;font-size:11.2px;color:#8a8a8a;transform:rotate(0.03deg) scaleX(1.0280)">Sale Price:</span>
<span class="t" style="left:805.30px;top:483.90px;font-size:13.6px;color:#000;transform:rotate(0.03deg) scaleX(0.9684)">89</span>
<span class="t k" style="left:805.60px;top:540.10px;font-size:9.8px;color:#000;transform:rotate(0.03deg) scaleX(0.8213)">Update</span>
<span class="t k" style="left:871.50px;top:540.10px;font-size:9.8px;color:#000;transform:rotate(0.03deg) scaleX(0.8521)">Delete</span>
<span class="t k" style="left:935.00px;top:540.10px;font-size:9.8px;color:#000;transform:rotate(0.03deg) scaleX(0.8773)">Cancel</span>
</body></html>
